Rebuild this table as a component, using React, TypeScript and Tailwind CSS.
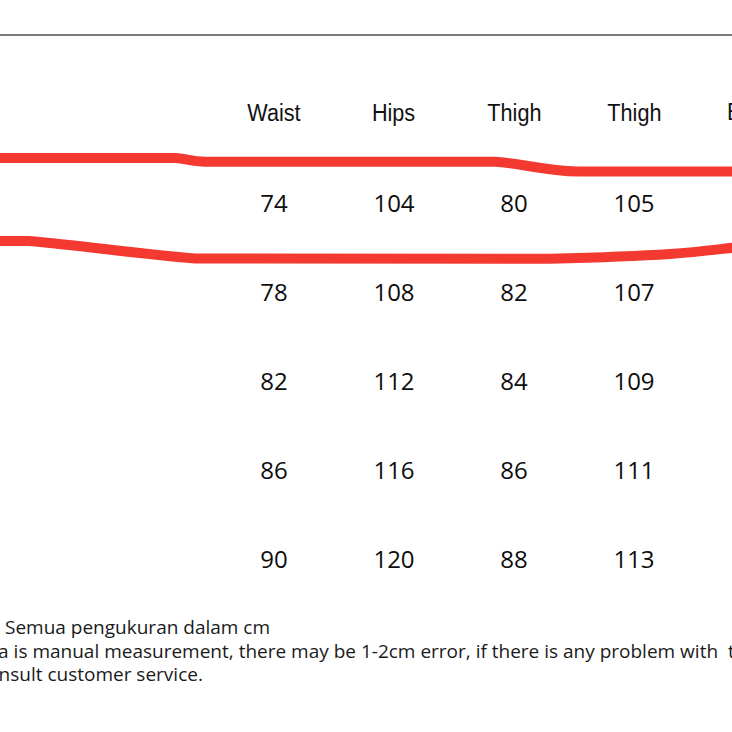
const headers = ["Waist", "Hips", "Thigh", "Thigh"];

const rows = [
  ["74", "104", "80", "105"],
  ["78", "108", "82", "107"],
  ["82", "112", "84", "109"],
  ["86", "116", "86", "111"],
  ["90", "120", "88", "113"],
];

const gridCols = "grid grid-cols-[214px_120px_120px_120px_120px_120px]";

export default function App() {
  return (
    <div className="relative w-[732px] h-[732px] overflow-hidden bg-white text-[#111]">
      <div className="pt-[34px]">
        <div className="h-[2px] bg-[#7c7c7c]" />
      </div>

      <div className="mt-[33px] w-[900px]">
        <div className={`${gridCols} h-[89px] items-center`}>
          <div />
          {headers.map((h, i) => (
            <div key={i} className="flex justify-center">
              <span className="inline-block scale-x-[0.92] font-['Liberation_Sans',Arial,sans-serif] text-[23.5px] leading-none">
                {h}
              </span>
            </div>
          ))}
          <div className="pl-[31px]">
            <span className="inline-block scale-x-[0.92] font-['Liberation_Sans',Arial,sans-serif] text-[23.5px] leading-none">
              Bust
            </span>
          </div>
        </div>

        {rows.map((r, ri) => (
          <div key={ri} className={`${gridCols} h-[89px] items-center`}>
            <div />
            {r.map((v, ci) => (
              <div
                key={ci}
                className="text-center font-['Open_Sans','Noto_Sans',sans-serif] text-[24px] leading-none text-[#0d0d0d]"
              >
                {v}
              </div>
            ))}
            <div />
          </div>
        ))}
      </div>

      <div className="mt-[13px] font-['Open_Sans','Noto_Sans',sans-serif] text-[19px] leading-[23.5px] text-[#1a1a1a] whitespace-nowrap">
        <p className="pl-[5px]">Semua pengukuran dalam cm</p>
        <p className="-ml-[33px]">Data is manual measurement, there may be 1-2cm error, if there is any problem with&nbsp; the size please</p>
        <p className="-ml-[22px]">consult customer service.</p>
      </div>

      {/* hand-drawn red marks */}
      <svg
        className="absolute left-0 top-0 pointer-events-none"
        width="732"
        height="732"
        viewBox="0 0 732 732"
        fill="none"
      >
        <path
          d="M-5 158 L 175 158 C 185 158.5, 192 161.5, 205 161.7 L 495 161.7 C 520 163, 545 171, 578 171.5 L 740 171.5"
          stroke="#f43a30"
          strokeWidth="10"
          strokeLinecap="round"
          strokeLinejoin="round"
        />
        <path
          d="M-5 241 L 28 241 C 60 243, 130 253, 195 258.5 L 550 258.7 C 600 257.5, 640 256, 670 254 C 700 252, 720 249, 740 247"
          stroke="#f43a30"
          strokeWidth="10"
          strokeLinecap="round"
          strokeLinejoin="round"
        />
      </svg>
    </div>
  );
}
